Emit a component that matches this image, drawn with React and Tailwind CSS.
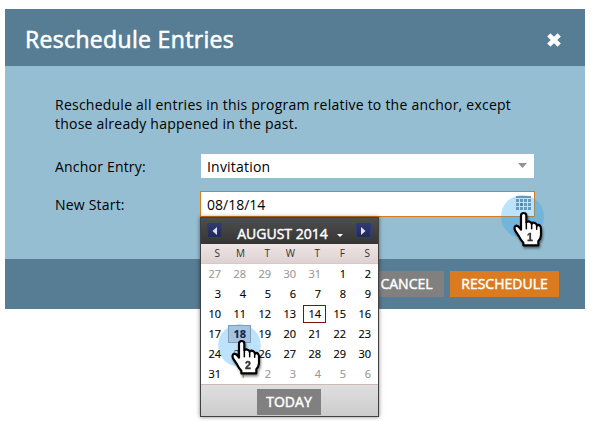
const days = [
  27, 28, 29, 30, 31, 1, 2, 3, 4, 5, 6, 7, 8, 9, 10, 11, 12, 13, 14, 15, 16, 17,
  18, 19, 20, 21, 22, 23, 24, 25, 26, 27, 28, 29, 30, 31, 1, 2, 3, 4, 5, 6,
];

function dayClass(day, i) {
  if (i < 5 || i > 35) return "border-transparent text-[#999]";
  if (day === 14) return "border-[#7a1010] text-black";
  if (day === 18) return "border-[#7f9cb8] bg-[#a5c4df] font-bold text-[#14264a]";
  return "border-transparent text-black";
}

function Hand({ step }) {
  return (
    <svg width="32" height="40" viewBox="0 0 96 120" className="block drop-shadow-[1px_2px_1px_rgba(0,0,0,0.45)]">
      <path
        d="M27 56V14Q27 6 35 6Q43 6 43 14V34Q47 29 53 32Q58 34 59 38Q64 33 70 37Q74 39 75 44Q80 40 84 44Q87 47 87 54V72Q87 82 79 91V103H34V95Q26 87 21 76L9 58Q5 47 12 44Q18 43 25 53Z"
        fill="white"
        stroke="black"
        strokeWidth="6.5"
        strokeLinejoin="round"
      />
      <path d="M43 34V53M59 38V53M74 44V55" fill="none" stroke="black" strokeWidth="4.5" strokeLinecap="round" />
      <text x="54" y="90" textAnchor="middle" fontSize="32" fontWeight="700" fontFamily="Liberation Sans, Arial, sans-serif" fill="#333" stroke="#333" strokeWidth="1">
        {step}
      </text>
    </svg>
  );
}

function Arrow({ left }) {
  return (
    <span className="flex h-[15px] w-[15px] items-center justify-center rounded-[1px] border border-[#2d3a80] bg-linear-to-b from-[#303a70] to-[#242a56]">
      <svg width="5" height="8" viewBox="0 0 5 8" className="block">
        <path d={left ? "M5 0V8L0.5 4Z" : "M0 0V8L4.5 4Z"} fill="#dfe3f5" />
      </svg>
    </span>
  );
}

function Calendar() {
  return (
    <div className="flex h-[200px] w-[179px] flex-col border border-[#404040] bg-white shadow-[0_0_4px_rgba(0,0,0,0.5)]">
      <div className="flex h-[26px] shrink-0 items-start justify-between bg-linear-to-b from-[#4e4e4e] to-[#353535] pl-[6px] pr-[7px] pt-[5px]">
        <Arrow left />
        <div className="flex items-center gap-[9px] pl-[2px] text-[14px] leading-[22px] text-white [-webkit-text-stroke:0.45px_white]">
          <span className="whitespace-nowrap">AUGUST 2014</span>
          <svg width="6" height="3" viewBox="0 0 6 3" className="mt-[3px] block">
            <path d="M0 0H6L3 3Z" fill="white" />
          </svg>
        </div>
        <Arrow />
      </div>
      <div className="grid h-[20px] shrink-0 grid-cols-[repeat(7,25px)] border-b border-[#d8c8c8] bg-linear-to-b from-[#eee5e5] to-[#dfd1d1] text-right text-[10px] leading-[19px] text-[#333]">
        {["S", "M", "T", "W", "T", "F", "S"].map((d, i) => (
          <span key={i} className="pr-[6px]">{d}</span>
        ))}
      </div>
      <div className="grid h-[120px] shrink-0 grid-cols-[repeat(7,25px)] grid-rows-[repeat(6,20px)] pl-px text-right text-[11px] [-webkit-text-stroke:0.15px_currentColor]">
        {days.map((day, i) => (
          <span key={i} className={"mx-px mt-[1px] h-[18px] border pr-[4px] leading-[15px] " + dayClass(day, i)}>
            {day}
          </span>
        ))}
      </div>
      <div className="flex min-h-0 flex-1 border-t border-[#cdb9b9] bg-linear-to-b from-[#dfdfdf] to-[#cccccc] pl-[56px] pt-[4px]">
        <button className="h-[26px] w-[64px] bg-[#808080] text-[14px] leading-[26px] text-white [-webkit-text-stroke:0.45px_white]">TODAY</button>
      </div>
    </div>
  );
}

function CalendarIcon() {
  return (
    <svg width="15" height="15" viewBox="0 0 15 15" className="block" fill="#8495a3">
      <path d="M0 0H15V2H0Z" />
      {[3, 7, 11].map((y) =>
        [0, 4, 8, 12].map((x) => (
          <rect key={x + "-" + y} x={x} y={y} width="3" height="3" />
        ))
      )}
      <path d="M5 7H6V8H7V9H6V10H5V9H4V8H5Z" fill="#536c80" />
    </svg>
  );
}

export default function App() {
  return (
    <div className="relative h-[421px] w-[594px] overflow-hidden bg-white pl-[5px] pt-[9px] font-['Open_Sans',sans-serif] text-black">
      <div className="flex h-[300px] w-[580px] flex-col bg-[#96bed2]">
        <header className="flex h-[57px] shrink-0 items-center justify-between bg-[#567d94] pl-[20px] pr-[24px]">
          <h1 className="mt-[3px] text-[23px] leading-[32px] tracking-[0.33px] text-white [-webkit-text-stroke:0.6px_white]">Reschedule Entries</h1>
          <svg width="14" height="14" viewBox="0 0 14 14" className="mt-[5px] block">
            <path d="M1.8 1.8L12.2 12.2M12.2 1.8L1.8 12.2" stroke="white" strokeWidth="4.6" />
          </svg>
        </header>
        <main className="flex-1 pl-[50px] pt-[29px] text-[14px]">
          <p className="whitespace-nowrap leading-[19px] tracking-[0.235px]">
            Reschedule all entries in this program relative to the anchor, except
            <br />
            those already happened in the past.
          </p>
          <div className="mt-[21px] flex h-[24px]">
            <span className="w-[146px] leading-[25px] tracking-[0.2px]">Anchor Entry:</span>
            <div className="flex h-[24px] w-[333px] items-center justify-between bg-white pl-[6px] pr-[7px]">
              <span className="leading-[25px] tracking-[0.2px]">Invitation</span>
              <svg width="9" height="5" viewBox="0 0 9 5" className="mb-[2px] block">
                <path d="M0 0H9L4.5 5Z" fill="#929292" />
              </svg>
            </div>
          </div>
          <div className="mt-[13px] flex h-[26px]">
            <span className="w-[145px] leading-[27px] tracking-[0.2px]">New Start:</span>
            <div className="flex h-[26px] w-[335px] items-center justify-between border border-[#d97b1e] bg-white pl-[6px] pr-[3px]">
              <span className="leading-[25px]">08/18/14</span>
              <div className="-mt-[2px]">
                <CalendarIcon />
              </div>
            </div>
          </div>
        </main>
        <footer className="flex h-[50px] shrink-0 justify-end gap-[6px] bg-[#567d94] pr-[26px] pt-[12px] text-[14px] leading-[26px] text-white [-webkit-text-stroke:0.45px_white]">
          <button className="h-[26px] w-[75px] bg-[#808080]">CANCEL</button>
          <button className="h-[26px] w-[109px] bg-[#d97b1e]">RESCHEDULE</button>
        </footer>
      </div>
      <div className="absolute left-[200px] top-[217px]">
        <Calendar />
      </div>
      <div className="absolute left-[501px] top-[195px] h-[43px] w-[43px] rounded-full bg-[rgba(32,161,242,0.3)]" />
      <div className="absolute left-[512px] top-[211px]">
        <Hand step="1" />
      </div>
      <div className="absolute left-[218px] top-[324px] h-[43px] w-[43px] rounded-full bg-[rgba(32,161,242,0.3)] [mask-image:linear-gradient(black,black),linear-gradient(black,black)] [mask-composite:exclude] [mask-position:0_0,10px_1px] [mask-repeat:no-repeat] [mask-size:100%_100%,23px_18px]" />
      <div className="absolute left-[230px] top-[339px]">
        <Hand step="2" />
      </div>
    </div>
  );
}
